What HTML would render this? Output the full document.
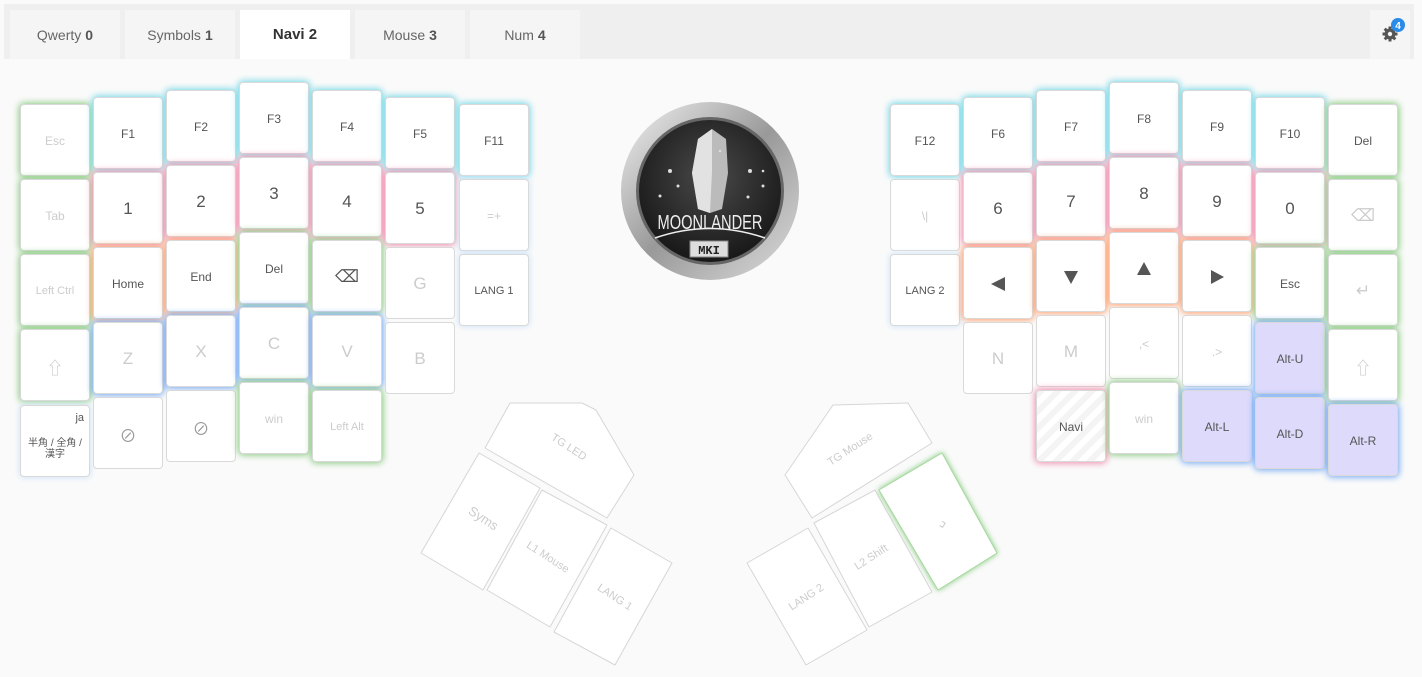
<!DOCTYPE html>
<html><head><meta charset="utf-8"><style>
*{box-sizing:border-box;margin:0;padding:0}
body{width:1422px;height:677px;background:#fafafa;font-family:"Liberation Sans","Noto Sans CJK JP",sans-serif;position:relative;overflow:hidden}
.bar{position:absolute;left:4px;top:4px;width:1410px;height:55px;background:#efefef}
.tab{position:absolute;top:10px;height:49px;width:110px;background:#f5f5f5;color:#666;font-size:14px;display:flex;align-items:center;justify-content:center}
.tab b{margin-left:4px;color:#555}
.tab.on{background:#fff;color:#333;font-weight:bold;font-size:15px}
.set{position:absolute;left:1370px;top:10px;width:40px;height:49px;background:#f5f5f5}
.k{position:absolute;width:70px;height:72px;background:#fff;border:1px solid #d9d9d9;border-radius:4px;display:flex;align-items:center;justify-content:center;text-align:center;font-size:12px;color:#555;padding-top:2px}
.t{color:#ccc}
.big{font-size:17px}
.c{box-shadow:0 0 7px 1px #6fd6e6}
.p{box-shadow:0 0 7px 1px #ef86a8}
.o{box-shadow:0 0 7px 1px #ff9a66}
.g{box-shadow:0 0 7px 1px #85c97c}
.b{box-shadow:0 0 7px 1px #6ca4f2}
.l{box-shadow:0 0 6px 1px #d3e6f8}
.a{background:#dedafb}
.nav{background:repeating-linear-gradient(135deg,#f4f4f4 0 6px,#fff 6px 12px)}
</style></head><body>
<div class="bar"></div>
<div class="tab" style="left:10px">Qwerty<b>0</b></div>
<div class="tab" style="left:125px">Symbols<b>1</b></div>
<div class="tab on" style="left:240px">Navi 2</div>
<div class="tab" style="left:355px">Mouse<b>3</b></div>
<div class="tab" style="left:470px">Num<b>4</b></div>
<div class="set">
<svg width="40" height="49" viewBox="0 0 40 49"><g transform="translate(20,24)" fill="#555"><circle r="5.5"/><g stroke="#555" stroke-width="3"><line x1="0" y1="-7.5" x2="0" y2="7.5"/><line x1="-7.5" y1="0" x2="7.5" y2="0"/><line x1="-5.3" y1="-5.3" x2="5.3" y2="5.3"/><line x1="-5.3" y1="5.3" x2="5.3" y2="-5.3"/></g><circle r="2.2" fill="#f5f5f5"/></g><circle cx="28" cy="15" r="7" fill="#2a8be8"/><text x="28" y="19" font-size="10" font-weight="bold" fill="#fff" text-anchor="middle" font-family="Liberation Sans">4</text></svg>
</div>

<!-- left -->
<div class="k t g" style="left:20px;top:104px">Esc</div>
<div class="k t g" style="left:20px;top:179px">Tab</div>
<div class="k t g" style="left:20px;top:254px;font-size:11px">Left Ctrl</div>
<div class="k t g big" style="left:20px;top:329px">⇧</div>
<div class="k l" style="left:20px;top:405px;font-size:10px;flex-direction:column"><span style="position:absolute;right:5px;top:6px;font-size:11px">ja</span><span style="margin-top:14px;line-height:11px">半角 / 全角 /<br>漢字</span></div>

<div class="k c" style="left:93px;top:97px">F1</div>
<div class="k p big" style="left:93px;top:172px">1</div>
<div class="k o" style="left:93px;top:247px">Home</div>
<div class="k t b big" style="left:93px;top:322px">Z</div>
<div class="k big" style="left:93px;top:397px;color:#999">⊘</div>

<div class="k c" style="left:166px;top:90px">F2</div>
<div class="k p big" style="left:166px;top:165px">2</div>
<div class="k o" style="left:166px;top:240px">End</div>
<div class="k t b big" style="left:166px;top:315px">X</div>
<div class="k big" style="left:166px;top:390px;color:#999">⊘</div>

<div class="k c" style="left:239px;top:82px">F3</div>
<div class="k p big" style="left:239px;top:157px">3</div>
<div class="k g" style="left:239px;top:232px">Del</div>
<div class="k t b big" style="left:239px;top:307px">C</div>
<div class="k t g" style="left:239px;top:382px">win</div>

<div class="k c" style="left:312px;top:90px">F4</div>
<div class="k p big" style="left:312px;top:165px">4</div>
<div class="k g big" style="left:312px;top:240px">⌫</div>
<div class="k t b big" style="left:312px;top:315px">V</div>
<div class="k t g" style="left:312px;top:390px;font-size:11px">Left Alt</div>

<div class="k c" style="left:385px;top:97px">F5</div>
<div class="k p big" style="left:385px;top:172px">5</div>
<div class="k t big" style="left:385px;top:247px">G</div>
<div class="k t big" style="left:385px;top:322px">B</div>

<div class="k c" style="left:459px;top:104px">F11</div>
<div class="k t l" style="left:459px;top:179px">=+</div>
<div class="k l" style="left:459px;top:254px;font-size:11px">LANG 1</div>

<!-- logo -->
<svg style="position:absolute;left:620px;top:101px" width="180" height="180" viewBox="0 0 180 180">
<defs><linearGradient id="rg" x1="0" y1="0" x2="1" y2="1"><stop offset="0" stop-color="#f2f2f2"/><stop offset=".5" stop-color="#999"/><stop offset="1" stop-color="#ddd"/></linearGradient>
<radialGradient id="dg" cx=".5" cy=".4" r=".6"><stop offset="0" stop-color="#4a4a4a"/><stop offset="1" stop-color="#181818"/></radialGradient></defs>
<circle cx="90" cy="90" r="89" fill="url(#rg)"/><circle cx="90" cy="90" r="74" fill="#666"/><circle cx="90" cy="90" r="71" fill="url(#dg)"/>
<polygon points="78,38 92,28 106,38 108,72 102,108 90,112 78,108 72,72" fill="#bbb"/>
<polygon points="78,38 92,28 92,70 90,112 78,108 72,72" fill="#e2e2e2"/>
<g fill="#ddd"><circle cx="50" cy="70" r="2"/><circle cx="40" cy="95" r="1.5"/><circle cx="58" cy="85" r="1.5"/><circle cx="130" cy="70" r="2"/><circle cx="143" cy="85" r="1.5"/><circle cx="128" cy="96" r="1.5"/><circle cx="143" cy="70" r="1.3"/><circle cx="100" cy="50" r="1.2"/></g>
<text x="90" y="128" font-size="20" fill="#eee" text-anchor="middle" font-family="Liberation Sans" textLength="105" lengthAdjust="spacingAndGlyphs">MOONLANDER</text>
<path d="M35 137 Q90 118 145 137" stroke="#eee" stroke-width="1.5" fill="none"/>
<rect x="70" y="140" width="38" height="16" fill="#ddd" stroke="#888"/>
<text x="89" y="153" font-size="12" font-weight="bold" fill="#222" text-anchor="middle" font-family="Liberation Mono">MKI</text>
</svg>

<!-- right -->
<div class="k c" style="left:890px;top:104px">F12</div>
<div class="k t" style="left:890px;top:179px">\|</div>
<div class="k l" style="left:890px;top:254px;font-size:11px">LANG 2</div>

<div class="k c" style="left:963px;top:97px">F6</div>
<div class="k p big" style="left:963px;top:172px">6</div>
<div class="k o" style="left:963px;top:247px"><svg width="16" height="16"><polygon points="1,8 15,1 15,15" fill="#555"/></svg></div>
<div class="k t big" style="left:963px;top:322px">N</div>

<div class="k c" style="left:1036px;top:90px">F7</div>
<div class="k p big" style="left:1036px;top:165px">7</div>
<div class="k o" style="left:1036px;top:240px"><svg width="16" height="16"><polygon points="1,2 15,2 8,15" fill="#555"/></svg></div>
<div class="k t big" style="left:1036px;top:315px">M</div>
<div class="k p nav" style="left:1036px;top:390px">Navi</div>

<div class="k c" style="left:1109px;top:82px">F8</div>
<div class="k p big" style="left:1109px;top:157px">8</div>
<div class="k o" style="left:1109px;top:232px"><svg width="16" height="16"><polygon points="1,14 15,14 8,1" fill="#555"/></svg></div>
<div class="k t" style="left:1109px;top:307px">,&lt;</div>
<div class="k t g" style="left:1109px;top:382px">win</div>

<div class="k c" style="left:1182px;top:90px">F9</div>
<div class="k p big" style="left:1182px;top:165px">9</div>
<div class="k o" style="left:1182px;top:240px"><svg width="16" height="16"><polygon points="2,1 15,8 2,15" fill="#555"/></svg></div>
<div class="k t" style="left:1182px;top:315px">.&gt;</div>
<div class="k a b" style="left:1182px;top:390px">Alt-L</div>

<div class="k c" style="left:1255px;top:97px">F10</div>
<div class="k p big" style="left:1255px;top:172px">0</div>
<div class="k g" style="left:1255px;top:247px">Esc</div>
<div class="k a b" style="left:1255px;top:322px">Alt-U</div>
<div class="k a b" style="left:1255px;top:397px">Alt-D</div>

<div class="k g" style="left:1328px;top:104px">Del</div>
<div class="k t g big" style="left:1328px;top:179px">⌫</div>
<div class="k t g big" style="left:1328px;top:254px">↵</div>
<div class="k t g big" style="left:1328px;top:329px">⇧</div>
<div class="k a b" style="left:1328px;top:404px">Alt-R</div>

<!-- thumbs -->
<svg style="position:absolute;left:0;top:0" width="1422" height="677">
<defs><filter id="gl" x="-30%" y="-30%" width="160%" height="160%"><feDropShadow dx="0" dy="0" stdDeviation="3" flood-color="#7cc873"/></filter></defs>
<g fill="#fff" stroke="#d6d6d6" stroke-width="1" stroke-linejoin="round">
<polygon points="510,403 582,403 596,410 634,475 607,518 485,448"/>
<polygon points="479,453 540,488 483,590 421,553"/>
<polygon points="542,490 607,525 550,627 487,590"/>
<polygon points="611,528 672,563 615,665 554,632"/>
<polygon points="833,405 908,403 932,443 812,518 785,475"/>
<polygon points="808,528 867,630 806,665 747,563"/>
<polygon points="875,490 932,592 869,627 814,523"/>
<polygon points="942,453 997,553 938,590 879,490" filter="url(#gl)" stroke="#a8d8a0"/>
</g>
<g font-family="Liberation Sans" font-size="11" fill="#ccc" text-anchor="middle">
<text transform="translate(567,450) rotate(33)">TG LED</text>
<text transform="translate(481,522) rotate(33)" font-size="13">Syms</text>
<text transform="translate(546,560) rotate(33)">L1 Mouse</text>
<text transform="translate(613,600) rotate(33)">LANG 1</text>
<text transform="translate(852,452) rotate(-33)">TG Mouse</text>
<text transform="translate(808,600) rotate(-33)">LANG 2</text>
<text transform="translate(873,560) rotate(-33)">L2 Shift</text>
<text transform="translate(942,524) rotate(-57)" font-size="12">␣</text>
</g>
</svg>
</body></html>
